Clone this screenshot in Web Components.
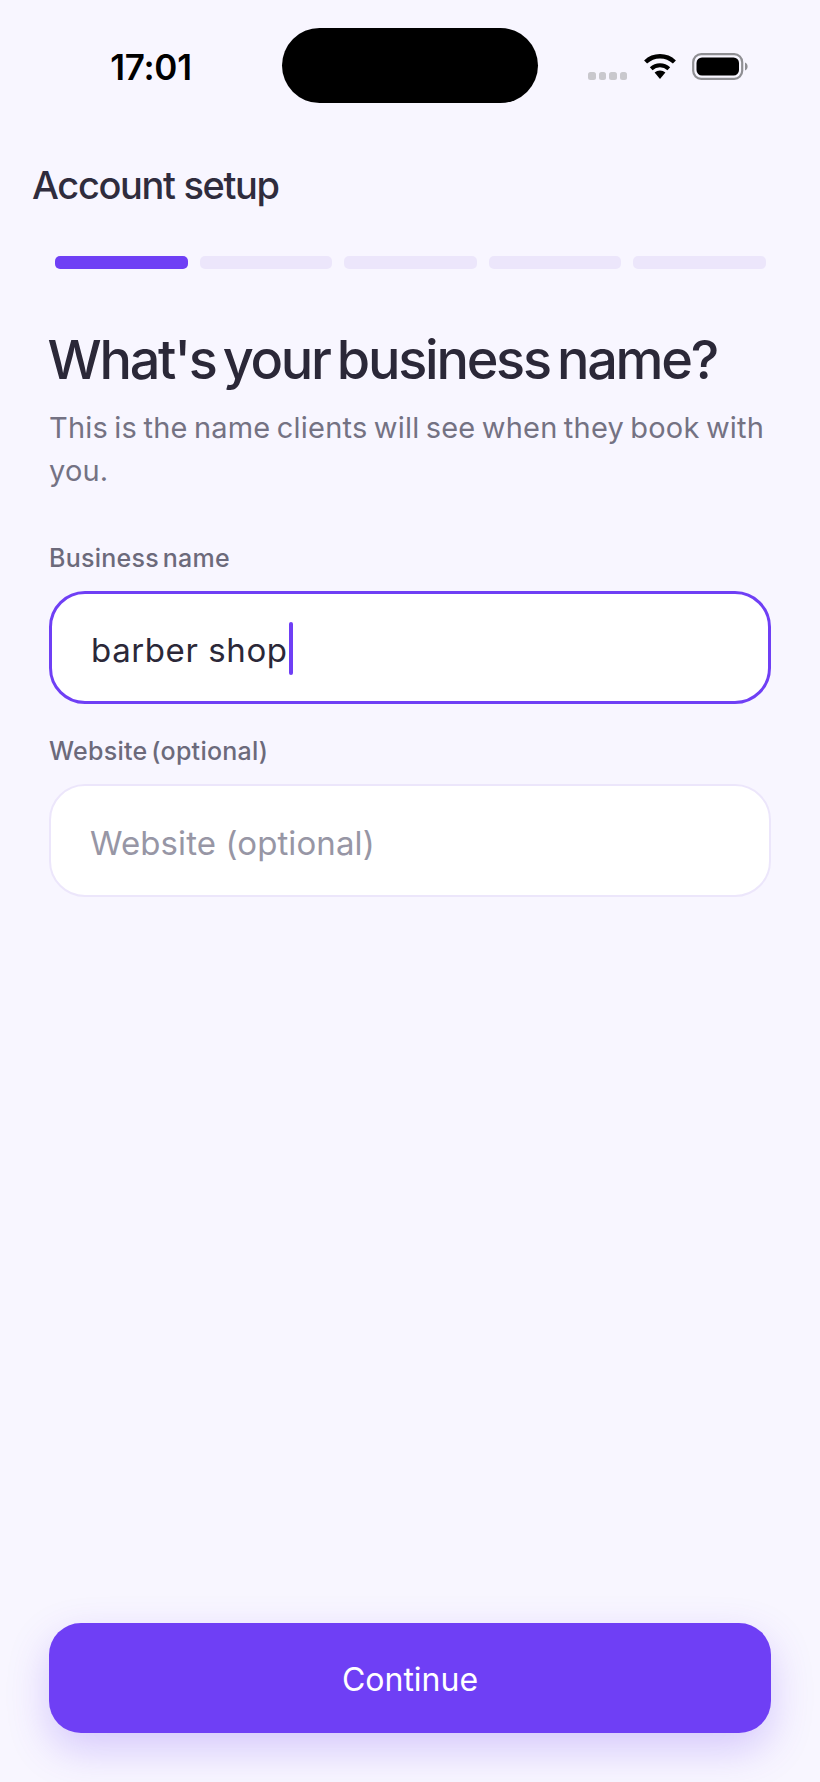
<!DOCTYPE html>
<html lang="en">
<head>
  <meta charset="UTF-8">
  <title>Account setup</title>
  <style>
    html, body { margin: 0; background: #f8f6ff; }
    body { width: 820px; height: 1782px; overflow: hidden; font-family: "Inter", sans-serif; color: #2b2838; }
  </style>
</head>
<body>
  <setup-screen>
    <status-bar slot="status" time="17:01"></status-bar>
    <step-progress slot="progress" steps="5" current="1"></step-progress>
    <span slot="title">Account setup</span>
    <span slot="heading">What's your business name?</span>
    <span slot="sub">This is the name clients will see when they book with you.</span>
    <text-field slot="fields" label="Business name" value="barber shop" focused></text-field>
    <text-field slot="fields" label="Website (optional)" placeholder="Website (optional)"></text-field>
    <primary-button slot="action">Continue</primary-button>
  </setup-screen>

  <script>
    class StatusBar extends HTMLElement {
      connectedCallback() {
        this.attachShadow({ mode: 'open' });
        this.shadowRoot.innerHTML = `
          <style>
            :host { display: grid; grid-template-columns: 282px 256px 282px; height: 103px; padding-top: 28px; box-sizing: content-box; }
            .time { font: 600 35px/1 "Inter", sans-serif; color: #000; text-align: center; padding: 22px 0 0 20px; letter-spacing: -0.3px; }
            .notch { height: 75px; background: #000; border-radius: 38px; }
            .icons { display: flex; align-items: flex-start; padding: 25px 0 0 50px; }
            .dots { display: flex; gap: 3px; margin: 19px 16px 0 0; }
            .dots i { width: 7.5px; height: 7.5px; border-radius: 2.5px; background: #c9c8cd; }
            svg { display: block; }
            .wifi { margin-right: 15px; }
          </style>
          <div class="time">${this.getAttribute('time')}</div>
          <div class="notch"></div>
          <div class="icons">
            <div class="dots"><i></i><i></i><i></i><i></i></div>
            <svg class="wifi" width="34" height="26" viewBox="0 0 34 26">
              <path d="M17 26 L11.6 19.6 A8 8 0 0 1 22.4 19.6 Z" fill="#000"/>
              <path d="M8.2 15.8 A13 13 0 0 1 25.8 15.8" fill="none" stroke="#000" stroke-width="4"/>
              <path d="M2.6 9 A21 21 0 0 1 31.4 9" fill="none" stroke="#000" stroke-width="4.4"/>
            </svg>
            <svg width="56" height="27" viewBox="0 0 56 27">
              <rect x="1.2" y="1.2" width="49" height="24.6" rx="8" fill="none" stroke="#8f8f93" stroke-width="2.2"/>
              <rect x="4.5" y="4.5" width="42.5" height="18" rx="5.5" fill="#000"/>
              <path d="M53 9.5 C55 10.5 55.6 12 55.6 13.5 C55.6 15 55 16.5 53 17.5 Z" fill="#8f8f93"/>
            </svg>
          </div>`;
      }
    }

    class StepProgress extends HTMLElement {
      connectedCallback() {
        const steps = Number(this.getAttribute('steps'));
        const current = Number(this.getAttribute('current'));
        let bars = '';
        for (let i = 1; i <= steps; i++) bars += `<i class="${i <= current ? 'on' : ''}"></i>`;
        this.attachShadow({ mode: 'open' });
        this.shadowRoot.innerHTML = `
          <style>
            :host { display: grid; grid-template-columns: repeat(${steps}, 132.5px); column-gap: 12px; }
            i { height: 13px; border-radius: 5px; background: #ece6fb; }
            i.on { background: #6f3ff5; }
          </style>${bars}`;
      }
    }

    class TextField extends HTMLElement {
      connectedCallback() {
        const value = this.getAttribute('value');
        const focused = this.hasAttribute('focused');
        const shown = value
          ? `<span class="value">${value}</span>${focused ? '<i class="caret"></i>' : ''}`
          : `<span class="placeholder">${this.getAttribute('placeholder') || ''}</span>`;
        this.attachShadow({ mode: 'open' });
        this.shadowRoot.innerHTML = `
          <style>
            :host { display: block; }
            label { display: block; font: 500 25px/32px "Inter", sans-serif; color: #6c6a7b; margin-bottom: 17px; letter-spacing: 0.25px; word-spacing: -3px; }
            .box { display: flex; align-items: center; height: 113px; box-sizing: border-box; padding: 5px 39px 0; background: #fff; border: 2.5px solid #ece6fb; border-radius: 36px; }
            .box.focus { border: 3px solid #6f3ff5; }
            .value, .placeholder { font: 400 33px/1 "Inter", sans-serif; }
            .value { color: #2b2838; letter-spacing: 0.6px; }
            .placeholder { color: #9796a5; letter-spacing: 0.1px; }
            .caret { width: 4px; height: 53px; border-radius: 2px; background: #6f3ff5; margin: -4px 0 0 1px; }
          </style>
          <label>${this.getAttribute('label')}</label>
          <div class="box ${focused ? 'focus' : ''}">${shown}</div>`;
      }
    }

    class PrimaryButton extends HTMLElement {
      constructor() {
        super();
        this.attachShadow({ mode: 'open' });
        this.shadowRoot.innerHTML = `
          <style>
            :host { display: flex; align-items: center; justify-content: center; height: 110px; box-sizing: border-box; padding-top: 4px; border-radius: 32px; background: #6f3ff5; color: #fff; font: 400 32px/1 "Inter", sans-serif; box-shadow: 0 16px 40px rgba(111, 63, 245, 0.25); }
          </style>
          <slot></slot>`;
      }
    }

    class SetupScreen extends HTMLElement {
      constructor() {
        super();
        this.attachShadow({ mode: 'open' });
        this.shadowRoot.innerHTML = `
          <style>
            :host { display: flex; flex-direction: column; height: 1782px; color: #2b2838; }
            .title { font: 500 38px/48px "Inter", sans-serif; letter-spacing: -1.35px; margin: 30px 0 0 32px; color: #2f2c3d; }
            .progress { margin: 47px 0 0 55px; }
            h1 { margin: 55px 0 -1px 47.5px; font: 500 54px/72px "Inter", sans-serif; letter-spacing: -2.25px; word-spacing: -5px; color: #2b2838; white-space: nowrap; }
            p { margin: 11px 40px 0 49px; font: 400 29px/43px "Inter", sans-serif; letter-spacing: 0.2px; word-spacing: -2px; color: #747283; }
            .fields { display: flex; flex-direction: column; gap: 31px; margin: 50px 49px 0 49px; }
            .action { margin: auto 49px 49px 49px; }
          </style>
          <slot name="status"></slot>
          <div class="title"><slot name="title"></slot></div>
          <div class="progress"><slot name="progress"></slot></div>
          <h1><slot name="heading"></slot></h1>
          <p><slot name="sub"></slot></p>
          <div class="fields"><slot name="fields"></slot></div>
          <div class="action"><slot name="action"></slot></div>`;
      }
    }

    customElements.define('status-bar', StatusBar);
    customElements.define('step-progress', StepProgress);
    customElements.define('text-field', TextField);
    customElements.define('primary-button', PrimaryButton);
    customElements.define('setup-screen', SetupScreen);
  </script>
</body>
</html>
